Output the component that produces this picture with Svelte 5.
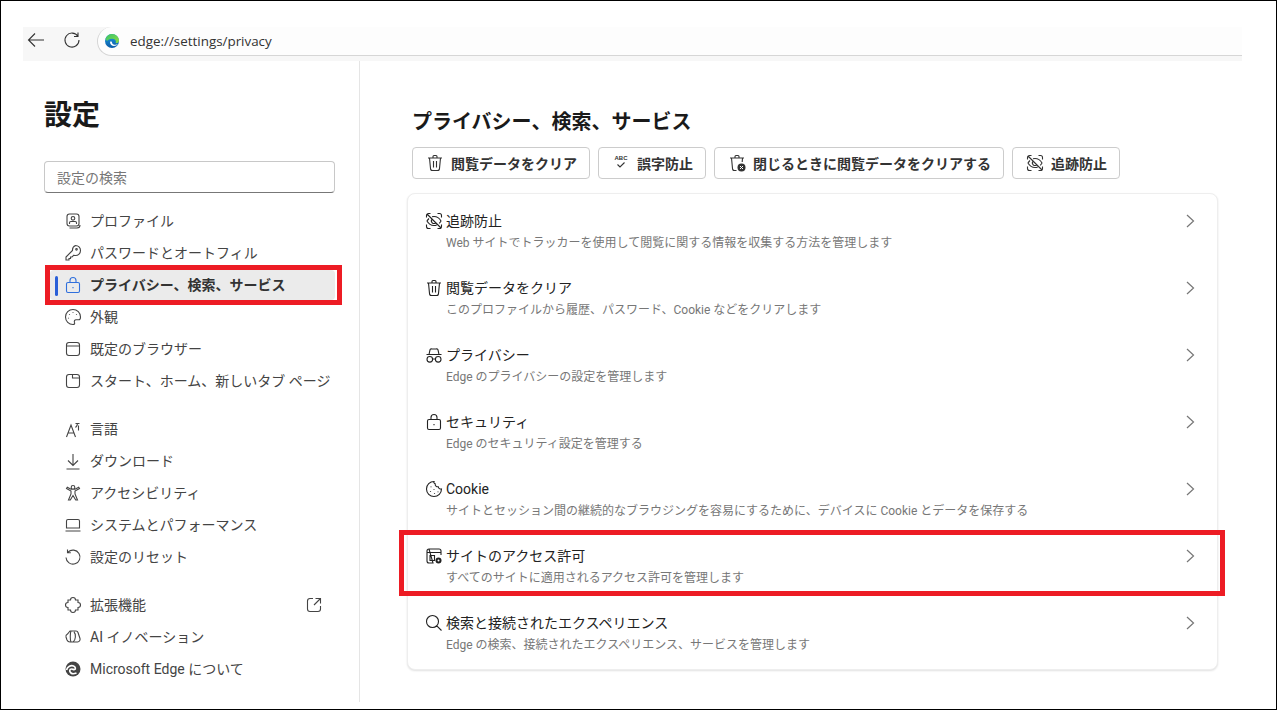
<script>
  const icons = {
    profile: "M6.500 3h7A2.500 2.500 0 0 1 16 5.500v7a2.500 2.500 0 0 1-2.500 2.500h-7A2.500 2.500 0 0 1 4 12.500v-7A2.500 2.500 0 0 1 6.500 3zM10 5.500a1.800 1.800 0 1 0 0 3.600a1.800 1.800 0 0 0 0-3.600zM6.500 13v-1.200c0-.8.600-1.300 1.300-1.300h4.400c.7 0 1.300.5 1.300 1.300V13M6.500 17h7.500a3 3 0 0 0 3-3",
    key: "M12.500 2.500a5 5 0 0 1 0 10c-.6 0-1.100-.1-1.600-.3L9 14H7.500v1.500H6V17H3v-3l6.500-6.500A5 5 0 0 1 12.500 2.500zM13.500 5.500a.8.800 0 1 0 0 1.600a.8.800 0 0 0 0-1.600z",
    lock: "M5 7.500h10A1.500 1.500 0 0 1 16.500 9v7a1.500 1.500 0 0 1-1.500 1.500H5A1.500 1.500 0 0 1 3.500 16V9A1.500 1.500 0 0 1 5 7.500zM7 7.500V5.500a3 3 0 0 1 6 0v2M10 12v1.200",
    palette: "M10 2.500a7.500 7.500 0 0 0 0 15c1.500 0 2-1 1.500-2c-.6-1.400.2-2.700 1.500-2.700h2.700c1 0 1.800-.8 1.800-2.800A7.500 7.500 0 0 0 10 2.500zM6.500 7v.8M10 5.200v.8M13.500 7v.8M5.500 10.800v.8",
    browser: "M6 3.500h8A2.500 2.500 0 0 1 16.500 6v8a2.500 2.500 0 0 1-2.500 2.500H6A2.500 2.500 0 0 1 3.500 14V6A2.500 2.500 0 0 1 6 3.500zM3.500 7h13",
    start: "M6 3.500h8A2.500 2.500 0 0 1 16.500 6v8a2.500 2.500 0 0 1-2.500 2.500H6A2.500 2.500 0 0 1 3.500 14V6A2.500 2.500 0 0 1 6 3.500zM9.500 3.500V7h7",
    lang: "M3.500 18L8 6L12.500 18M5 14h6M12.500 4.500h4M14.500 4.500c0 2-1 3-2 4M15.500 6.500v5",
    download: "M10 3v11M5 9.500L10 14.500l5-5M3.500 18h13",
    access: "M10 2.500a1.800 1.800 0 1 1 0 3.600a1.800 1.800 0 0 1 0-3.600zM3.500 5.500L8 8v3l-2.500 6h1.800L10 12.500l2.700 4.500h1.800L12 11V8l4.500-2.500l-.8-1.300l-3.700 2h-4l-3.700-2z",
    laptop: "M5 4.500h10a1.500 1.500 0 0 1 1.500 1.500v7h-13V6A1.500 1.500 0 0 1 5 4.500zM2.500 16h15",
    reset: "M5 5.200A7 7 0 1 1 3 10.500M4.500 2.500v3.200h3.300",
    ext: "M7.500 5a2.500 2.500 0 0 1 5 0h2.500v2.500a2.500 2.500 0 0 1 0 5V15h-2.500a2.500 2.500 0 0 1-5 0H5v-2.500a2.500 2.500 0 0 1 0-5V5z",
    ai: "M7 4h6c1 0 1.700.6 2 1.500l2 6c.4 1.500-.5 3.500-2.500 3.500H7c-1.500 0-2.500-.8-3-2l-1-3c-.4-1.500.5-2.500 1.500-3zM8 4c-1 2-1 9 0 11M11 5c2 2 2 8-1 10",
    trash: "M3 5h14M8 5V3.500a1 1 0 0 1 1-1h2a1 1 0 0 1 1 1V5M4.500 5l1 10.500a2 2 0 0 0 2 2h5a2 2 0 0 0 2-2l1-10.500M8.500 8v6.500M11.500 8v6.500",
    trashx: "M3 5h14M8 5V3.500a1 1 0 0 1 1-1h2a1 1 0 0 1 1 1V5M4.500 5l1 10.500a2 2 0 0 0 2 2h2M15.500 5l-.3 4",
    track: "M2.500 6.500V4.500a2 2 0 0 1 2-2h2M13.500 2.500h2a2 2 0 0 1 2 2v2M17.500 13.500v2a2 2 0 0 1-2 2h-2M6.500 17.500h-2a2 2 0 0 1-2-2v-2M3 3l14 14M5 7.500C3.800 8.700 3 10 3 10s2.500 4.500 7 4.500c1 0 1.900-.2 2.700-.6M8 5.800c.6-.2 1.300-.3 2-.3c4.500 0 7 4.500 7 4.500s-.7 1.200-1.800 2.400M8.200 8.200a2.500 2.500 0 0 0 3.600 3.600",
    glasses: "M2.500 9.500h15M5 9.500l1-4.500c.2-.8 1-1.300 2-1h4c1-.3 1.800.2 2 1L15 9.500M5.800 11.500a2.800 2.800 0 1 1 0 5.600a2.800 2.800 0 0 1 0-5.600zM14.200 11.500a2.800 2.800 0 1 1 0 5.600a2.800 2.800 0 0 1 0-5.600zM8.600 14h2.800",
    cookie: "M10 2.500a7.500 7.500 0 1 0 7.500 7.500c-1.500.3-2.900-.5-3.200-2.200c-1.800.2-3.400-1.100-3.100-3C10 4.300 9.500 3.300 10 2.500zM7 7.500v.8M6.500 12v.8M10 10v.8M10.500 14v.8M14 12.500v.8",
    site: "M5 3h10a2 2 0 0 1 2 2v4M9 17H5a2 2 0 0 1-2-2V5a2 2 0 0 1 2-2zM3 6.500h14M6 9.500h4.500v5H6z",
    search: "M8.500 2.500a6 6 0 1 1 0 12a6 6 0 0 1 0-12zM12.800 12.800L17.500 17.500",
    open: "M9 3.500H6A2.500 2.500 0 0 0 3.500 6v8A2.500 2.500 0 0 0 6 16.500h8a2.500 2.500 0 0 0 2.500-2.500v-3M11.500 3.500H16.500V8.500M16.500 3.500L10 10"
  }

  const navGroups = [
    [
      { icon: "profile", label: "プロファイル" },
      { icon: "key", label: "パスワードとオートフィル" },
      { icon: "lock", label: "プライバシー、検索、サービス", active: true },
      { icon: "palette", label: "外観" },
      { icon: "browser", label: "既定のブラウザー" },
      { icon: "start", label: "スタート、ホーム、新しいタブ ページ" }
    ],
    [
      { icon: "lang", label: "言語" },
      { icon: "download", label: "ダウンロード" },
      { icon: "access", label: "アクセシビリティ" },
      { icon: "laptop", label: "システムとパフォーマンス" },
      { icon: "reset", label: "設定のリセット" }
    ],
    [
      { icon: "ext", label: "拡張機能", external: true },
      { icon: "ai", label: "AI イノベーション" },
      { icon: "edge", label: "Microsoft Edge について" }
    ]
  ]

  const actions = [
    { icon: "trash", label: "閲覧データをクリア" },
    { icon: "abc", label: "誤字防止" },
    { icon: "trashx", label: "閉じるときに閲覧データをクリアする" },
    { icon: "track", label: "追跡防止" }
  ]

  const rows = [
    { icon: "track", title: "追跡防止", desc: "Web サイトでトラッカーを使用して閲覧に関する情報を収集する方法を管理します" },
    { icon: "trash", title: "閲覧データをクリア", desc: "このプロファイルから履歴、パスワード、Cookie などをクリアします" },
    { icon: "glasses", title: "プライバシー", desc: "Edge のプライバシーの設定を管理します" },
    { icon: "lock", title: "セキュリティ", desc: "Edge のセキュリティ設定を管理する" },
    { icon: "cookie", title: "Cookie", desc: "サイトとセッション間の継続的なブラウジングを容易にするために、デバイスに Cookie とデータを保存する" },
    { icon: "site", title: "サイトのアクセス許可", desc: "すべてのサイトに適用されるアクセス許可を管理します", marked: true },
    { icon: "search", title: "検索と接続されたエクスペリエンス", desc: "Edge の検索、接続されたエクスペリエンス、サービスを管理します" }
  ]
</script>

{#snippet icon(name)}
  <svg class="icon" viewBox="0 0 20 20" width="20" height="20">
    {#if name === "edge"}
      <circle cx="10" cy="10" r="7.500" fill="#444" />
      <path d="M3.500 11c1-3.500 4.500-5 7-4c2 .8 2.500 3 1 3.500c-1 .3-1.500-.5-3-.5c-2 0-2.500 2.500-.5 4c1 .8 3 1 5.500 0" fill="none" stroke="#fff" stroke-width="1.700" />
    {:else if name === "abc"}
      <text x="10" y="7" class="abc">ABC</text>
      <path d="M6.500 11.500L9 14l4.500-4.500" fill="none" stroke="currentColor" stroke-width="1.100" />
    {:else}
      <path d={icons[name]} fill="none" stroke="currentColor" stroke-width="1.100" />
      {#if name === "trashx"}
        <circle cx="14.500" cy="14.500" r="4" fill="#333" />
        <path d="M13 13l3 3M16 13l-3 3" stroke="#fff" stroke-width="1" />
      {:else if name === "site"}
        <circle cx="14.500" cy="14.500" r="3" fill="#222" />
        <circle cx="14.500" cy="14.500" r="1" fill="#fff" />
      {/if}
    {/if}
  </svg>
{/snippet}

<div class="frame">
  <header class="toolbar">
    <button class="tool back" aria-label="戻る">
      <svg viewBox="0 0 20 20" width="20" height="20"><path d="M18 10H2.500M9 3.500L2.500 10L9 16.500" fill="none" stroke="#333" stroke-width="1.100" /></svg>
    </button>
    <button class="tool" aria-label="更新">
      <svg viewBox="0 0 20 20" width="20" height="20"><path d="M16 2.500V6.500H12M15.900 6.300A7 7 0 1 0 17 10" fill="none" stroke="#333" stroke-width="1.100" /></svg>
    </button>
    <div class="address">
      <svg class="logo" viewBox="0 0 16 16" width="16" height="16">
        <defs>
          <linearGradient id="edgeBlue" x1="0" y1="0" x2="0" y2="1"><stop offset="0" stop-color="#1b9de2" /><stop offset="1" stop-color="#0c5aa6" /></linearGradient>
          <linearGradient id="edgeGreen" x1="0" y1="0" x2="1" y2="1"><stop offset="0" stop-color="#37c46d" /><stop offset="1" stop-color="#8fdc3f" /></linearGradient>
        </defs>
        <circle cx="8" cy="8" r="7" fill="url(#edgeBlue)" />
        <path d="M1.500 6C3 2 6 1 8 1c4 0 7 3 7 6.500c0 2-2 3-3.500 2.500c1-1.500 0-4-3-4.300C6 5.500 4 6.500 3 8z" fill="url(#edgeGreen)" />
        <path d="M6 9c0 2.500 2 4 4 4c1.500 0 3-.7 4-2c-1.500.8-3 1-4.500.4c-1-.4-1.600-1.300-1.500-2.400c-.7-.6-1.700-.6-2 0z" fill="#fff" />
      </svg>
      <span>edge://settings/privacy</span>
    </div>
  </header>

  <div class="page">
    <aside class="sidebar">
      <h1>設定</h1>
      <input class="search" placeholder="設定の検索" />
      {#each navGroups as group}
        <nav class="group">
          {#each group as item}
            <div class="item" class:active={item.active}>
              {@render icon(item.icon)}
              <span class="label">{item.label}</span>
              {#if item.external}
                <span class="external">{@render icon("open")}</span>
              {/if}
              {#if item.active}<span class="mark"></span>{/if}
            </div>
          {/each}
        </nav>
      {/each}
    </aside>

    <main class="content">
      <h2>プライバシー、検索、サービス</h2>
      <div class="actions">
        {#each actions as action}
          <button class="action">
            {@render icon(action.icon)}
            <span>{action.label}</span>
          </button>
        {/each}
      </div>
      <section class="card">
        {#each rows as row}
          <div class="row">
            <span class="row-icon">{@render icon(row.icon)}</span>
            <div class="text">
              <div class="title">{row.title}</div>
              <div class="desc">{row.desc}</div>
            </div>
            <svg class="chevron" viewBox="0 0 10 16" width="10" height="16"><path d="M2 2l6.500 6L2 14" fill="none" stroke="#777" stroke-width="1.200" /></svg>
            {#if row.marked}<span class="mark"></span>{/if}
          </div>
        {/each}
      </section>
    </main>
  </div>
</div>

<style>
  :global(body) {
    margin: 0;
    background: #fff;
    font-family: Roboto, "Noto Sans CJK JP", sans-serif;
    color: #333;
  }
  .frame {
    box-sizing: border-box;
    width: 1277px;
    height: 710px;
    border: 1px solid #000;
    padding: 26px 34px 7px 22px;
    background: #fff;
    display: flex;
    flex-direction: column;
  }
  .toolbar {
    display: flex;
    align-items: flex-start;
    height: 34px;
    background: #f7f7f7;
    flex: none;
  }
  .tool {
    width: 36px;
    height: 26px;
    margin-right: 7px;
    padding: 0;
    border: none;
    background: none;
    display: flex;
    align-items: center;
    justify-content: center;
  }
  .tool.back {
    width: 26px;
    margin-right: 5px;
  }
  .address {
    flex: 1;
    height: 29px;
    box-sizing: border-box;
    display: flex;
    align-items: center;
    padding-left: 6px;
    gap: 10px;
    background: #fdfdfd;
    border: 1px solid #d6d6d6;
    border-width: 0 0 1px 1px;
    border-radius: 15px 0 0 15px;
    font: 13.400px "Open Sans", sans-serif;
    color: #333;
  }
  .page {
    flex: 1;
    display: flex;
    min-height: 0;
  }
  .sidebar {
    box-sizing: border-box;
    width: 337px;
    padding: 0 24px 0 21px;
    border-right: 1px solid #e5e5e5;
  }
  h1 {
    margin: 34px 0 24px;
    font-size: 28px;
    line-height: 42px;
    font-weight: 700;
    color: #1a1a1a;
  }
  .search {
    display: block;
    box-sizing: border-box;
    width: 291px;
    height: 32px;
    margin-bottom: 12px;
    padding: 0 12px;
    border: 1px solid #c8c8c8;
    border-bottom-color: #777;
    border-radius: 4px;
    font: 14px "Noto Sans CJK JP", sans-serif;
    background: #fff;
  }
  .search::placeholder {
    color: #777;
  }
  .group {
    margin-bottom: 16px;
  }
  .item {
    position: relative;
    display: flex;
    align-items: center;
    height: 32px;
    gap: 7px;
    padding-left: 16px;
    margin-left: 3px;
    font-size: 14px;
    color: #444;
  }
  .item .icon {
    color: #444;
    flex: none;
  }
  .label {
    white-space: nowrap;
    padding-bottom: 2px;
  }
  .item.active {
    font-weight: 700;
    color: #333;
  }
  .item.active .icon {
    color: #2f6fdc;
  }
  .item.active::before {
    content: "";
    position: absolute;
    left: 3px;
    top: 1px;
    width: 285px;
    height: 30px;
    background: #ebebeb;
    border-radius: 4px;
  }
  .item.active::after {
    content: "";
    position: absolute;
    left: 8px;
    top: 7px;
    width: 3px;
    height: 20px;
    border-radius: 2px;
    background: #2a5fd8;
  }
  .item.active .icon,
  .item.active .label {
    position: relative;
  }
  .item .mark {
    position: absolute;
    left: -2px;
    top: -4px;
    width: 297px;
    height: 40px;
    box-sizing: border-box;
    border: 5px solid #ed1c24;
  }
  .external {
    margin-left: auto;
    margin-right: 11px;
    display: flex;
  }
  .content {
    flex: 1;
    padding: 0 24px 0 47px;
    min-width: 0;
  }
  h2 {
    margin: 46px 0 10px 5px;
    font-size: 20px;
    line-height: 30px;
    font-weight: 700;
    color: #1a1a1a;
    white-space: nowrap;
  }
  .actions {
    display: flex;
    gap: 8px;
    margin-left: 5px;
    margin-bottom: 14px;
  }
  .action {
    display: flex;
    align-items: center;
    gap: 6px;
    height: 32px;
    padding: 0 12px;
    border: 1px solid #ccc;
    border-radius: 4px;
    background: #fff;
    font: 700 14px "Noto Sans CJK JP", sans-serif;
    color: #333;
    white-space: nowrap;
  }
  .abc {
    font: 700 6px "Liberation Sans", sans-serif;
    text-anchor: middle;
    fill: currentColor;
  }
  .card {
    box-sizing: border-box;
    width: 811px;
    height: 477px;
    border: 1px solid #eee;
    border-radius: 8px;
    box-shadow: 0 1px 2px rgba(0, 0, 0, 0.12);
    background: #fff;
  }
  .row {
    position: relative;
    box-sizing: border-box;
    display: flex;
    align-items: flex-start;
    height: 67px;
    padding: 17px 22px 0 16px;
  }
  .row-icon {
    display: flex;
    color: #222;
    margin-right: 2px;
  }
  .text {
    flex: 1;
    min-width: 0;
  }
  .title {
    font-size: 14px;
    line-height: 21px;
    color: #222;
  }
  .desc {
    font-size: 12px;
    line-height: 21px;
    padding-top: 1px;
    color: #777;
  }
  .chevron {
    margin-top: 2px;
  }
  .row .mark {
    position: absolute;
    left: -9px;
    right: -8px;
    top: 1px;
    height: 66px;
    box-sizing: border-box;
    border: 5px solid #ed1c24;
  }
</style>
